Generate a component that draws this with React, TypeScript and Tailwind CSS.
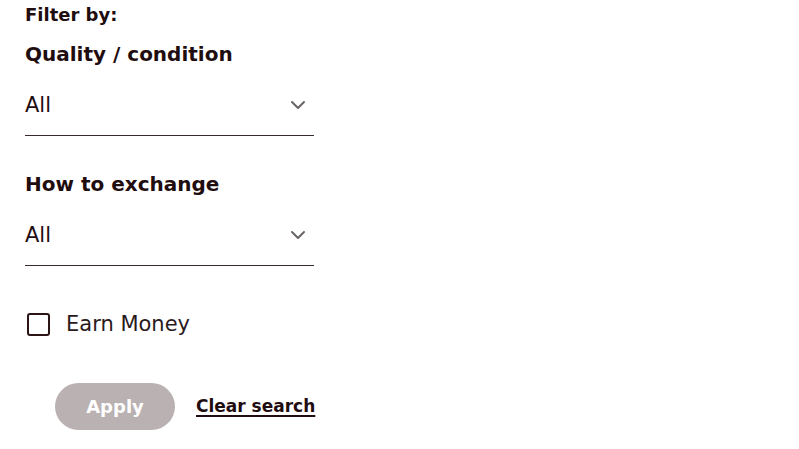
import React from "react";

function Chevron() {
  return (
    <svg width="16" height="10" viewBox="0 0 16 10" fill="none">
      <path d="M2 2 L8 8 L14 2" stroke="#6b6464" strokeWidth="2" strokeLinecap="round" strokeLinejoin="round" />
    </svg>
  );
}

function Select({ label }: { label: string }) {
  return (
    <div className="flex flex-col">
      <h3 className="text-[20px] leading-[24px] font-bold text-[#1f0d0f]">{label}</h3>
      <div className="mt-[27px] flex items-center justify-between border-b border-[#3b2a2b] pb-[18px] pr-[8px]">
        <span className="text-[21px] leading-[24px] text-[#1f0d0f]">All</span>
        <Chevron />
      </div>
    </div>
  );
}

export default function App() {
  return (
    <div className="min-h-[449px] w-[799px] bg-white" style={{ fontFamily: '"DejaVu Sans", sans-serif' }}>
      <div className="flex w-[314px] flex-col pl-[25px] pt-[4px]">
        <p className="text-[18px] leading-[22px] font-bold text-[#1f0d0f]">Filter by:</p>
        <div className="mt-[16px]">
          <Select label="Quality / condition" />
        </div>
        <div className="mt-[36px]">
          <Select label="How to exchange" />
        </div>
        <label className="mt-[46px] flex items-center gap-[16px] pl-[2px]">
          <span className="block h-[23px] w-[23px] rounded-[3px] border-2 border-[#2a1416]" />
          <span className="text-[21px] leading-[24px] text-[#2a1a1b]">Earn Money</span>
        </label>
        <div className="mt-[47px] flex items-center gap-[21px] pl-[30px]">
          <button className="h-[47px] w-[120px] shrink-0 rounded-full bg-[#bab1b2] text-[18px] font-bold text-white">Apply</button>
          <a className="whitespace-nowrap text-[17px] font-bold text-[#1f0d0f] underline decoration-2 underline-offset-[3px]">Clear search</a>
        </div>
      </div>
    </div>
  );
}
